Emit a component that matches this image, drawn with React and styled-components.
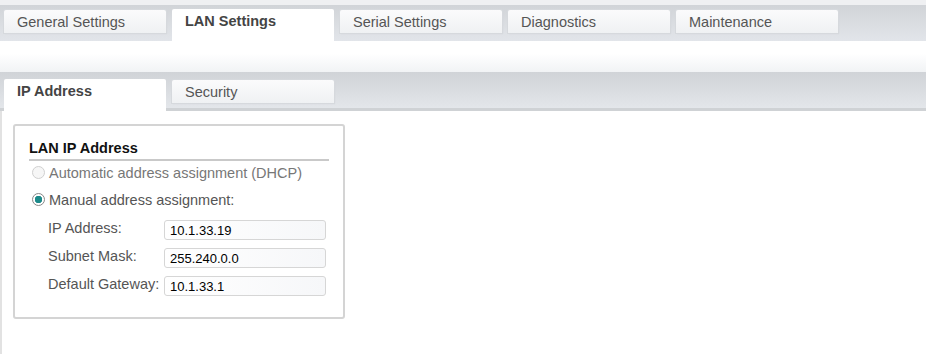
import React, { useState } from 'react'
import styled, { createGlobalStyle } from 'styled-components';

const GlobalStyle = createGlobalStyle`
  html, body {
    margin: 0;
    padding: 0;
    background: #fff;
    font-family: "Liberation Sans", Arial, sans-serif;
  }
`;

const mainTabs = ['General Settings', 'LAN Settings', 'Serial Settings', 'Diagnostics', 'Maintenance'];
const subTabs = ['IP Address', 'Security'];

const App = () => {
  const [tab, setTab] = useState('LAN Settings');
  const [subTab, setSubTab] = useState('IP Address');
  const [mode, setMode] = useState('manual');
  const [ip, setIp] = useState('10.1.33.19');
  const [mask, setMask] = useState('255.240.0.0');
  const [gateway, setGateway] = useState('10.1.33.1');

  return (
    <Page>
      <GlobalStyle />
      <TopBar>
        {mainTabs.map((name) => (
          <Tab key={name} $active={tab === name} $top onClick={() => setTab(name)}>
            {name}
          </Tab>
        ))}
      </TopBar>
      <Band />
      <SubBar>
        {subTabs.map((name) => (
          <Tab key={name} $active={subTab === name} onClick={() => setSubTab(name)}>
            {name}
          </Tab>
        ))}
      </SubBar>

      <Content>
        <Box>
          <Heading>LAN IP Address</Heading>
          <RadioRow $muted>
            <Radio $checked={mode === 'dhcp'} $disabled onClick={() => setMode('dhcp')} />
            Automatic address assignment (DHCP)
          </RadioRow>
          <RadioRow>
            <Radio $checked={mode === 'manual'} onClick={() => setMode('manual')} />
            Manual address assignment:
          </RadioRow>
          <Fields>
            <Label>IP Address:</Label>
            <Input value={ip} onChange={(e) => setIp(e.target.value)} />
            <Label>Subnet Mask:</Label>
            <Input value={mask} onChange={(e) => setMask(e.target.value)} />
            <Label>Default Gateway:</Label>
            <Input value={gateway} onChange={(e) => setGateway(e.target.value)} />
          </Fields>
        </Box>
      </Content>
    </Page>
  )
}

const Page = styled.div`
  width: 926px;
  height: 354px;
  overflow: hidden;
  background: #fff;
`;

const TopBar = styled.div`
  height: 36px;
  border-top: 5px solid #eff0f2;
  padding-left: 4px;
  display: flex;
  align-items: flex-end;
  gap: 6px;
  background: linear-gradient(#d1d4d8, #e2e5ea);
`;

const Band = styled.div`
  height: 31px;
  background: linear-gradient(#fff 40%, #f1f3f5);
`;

const SubBar = styled.div`
  height: 36px;
  padding-left: 4px;
  display: flex;
  align-items: flex-end;
  gap: 6px;
  background: linear-gradient(#d0d3d7, #e3e6ea);
  border-bottom: 3px solid #cfd2d5;
`;

const Tab = styled.div`
  box-sizing: border-box;
  width: 162px;
  height: ${(p) => (p.$active ? '32px' : '23px')};
  align-self: ${(p) => (p.$active ? 'flex-end' : 'flex-start')};
  margin-top: ${(p) => (p.$active ? '0' : p.$top ? '5px' : '8px')};
  margin-bottom: ${(p) => (p.$active && !p.$top ? '-3px' : '0')};
  padding: 4px 0 0 13px;
  font-size: 14.5px;
  line-height: 17px;
  font-weight: ${(p) => (p.$active ? 700 : 400)};
  color: ${(p) => (p.$active ? '#444' : '#555')};
  background: ${(p) => (p.$active ? '#fff' : 'linear-gradient(#fbfbfc, #eff1f3)')};
  box-shadow: ${(p) => (p.$active ? 'none' : '0 0 0 1px #d6d9dd, 1px 1px 1px #c8cbcf')};
  border-radius: 2px 2px 0 0;
  cursor: pointer;
`;

const Content = styled.div`
  border-left: 2px solid #e2e2e2;
  padding: 13px 0 0 11px;
  height: 240px;
`;

const Box = styled.div`
  box-sizing: border-box;
  width: 332px;
  height: 195px;
  border: 2px solid #d4d4d4;
  border-radius: 3px;
  padding: 14px 14px 0 14px;
`;

const Heading = styled.div`
  font-size: 14.5px;
  font-weight: 700;
  color: #111;
  line-height: 17px;
  padding-bottom: 2px;
  border-bottom: 2px solid #c9c9c9;
`;

const RadioRow = styled.label`
  display: flex;
  align-items: center;
  gap: 4px;
  height: 27px;
  margin-top: ${(p) => (p.$muted ? '-2px' : '0')};
  padding-left: 3px;
  font-size: 14.5px;
  color: ${(p) => (p.$muted ? '#777' : '#555')};
`;

const Radio = styled.span`
  box-sizing: border-box;
  width: 13px;
  height: 13px;
  border-radius: 50%;
  border: 1px solid ${(p) => (p.$disabled ? '#d0d0d0' : '#888')};
  background: ${(p) =>
    p.$checked ? 'radial-gradient(circle, #1d8a8a 0 3.5px, #fff 4px)' : '#f6f6f6'};
  cursor: pointer;
`;

const Fields = styled.div`
  display: grid;
  grid-template-columns: 116px 162px;
  row-gap: 8px;
  align-items: center;
  padding-left: 19px;
  margin-top: 7px;
`;

const Label = styled.span`
  font-size: 14.5px;
  color: #555;
  margin-top: -4px;
`;

const Input = styled.input`
  box-sizing: border-box;
  width: 162px;
  height: 20px;
  border: 1px solid #d6d6d6;
  border-radius: 3px;
  padding: 0 5px;
  font-family: "Liberation Sans", Arial, sans-serif;
  font-size: 13px;
  color: #000;
  background: linear-gradient(90deg, #fff, #f6f7f9);
  outline: none;
`;

export default App
